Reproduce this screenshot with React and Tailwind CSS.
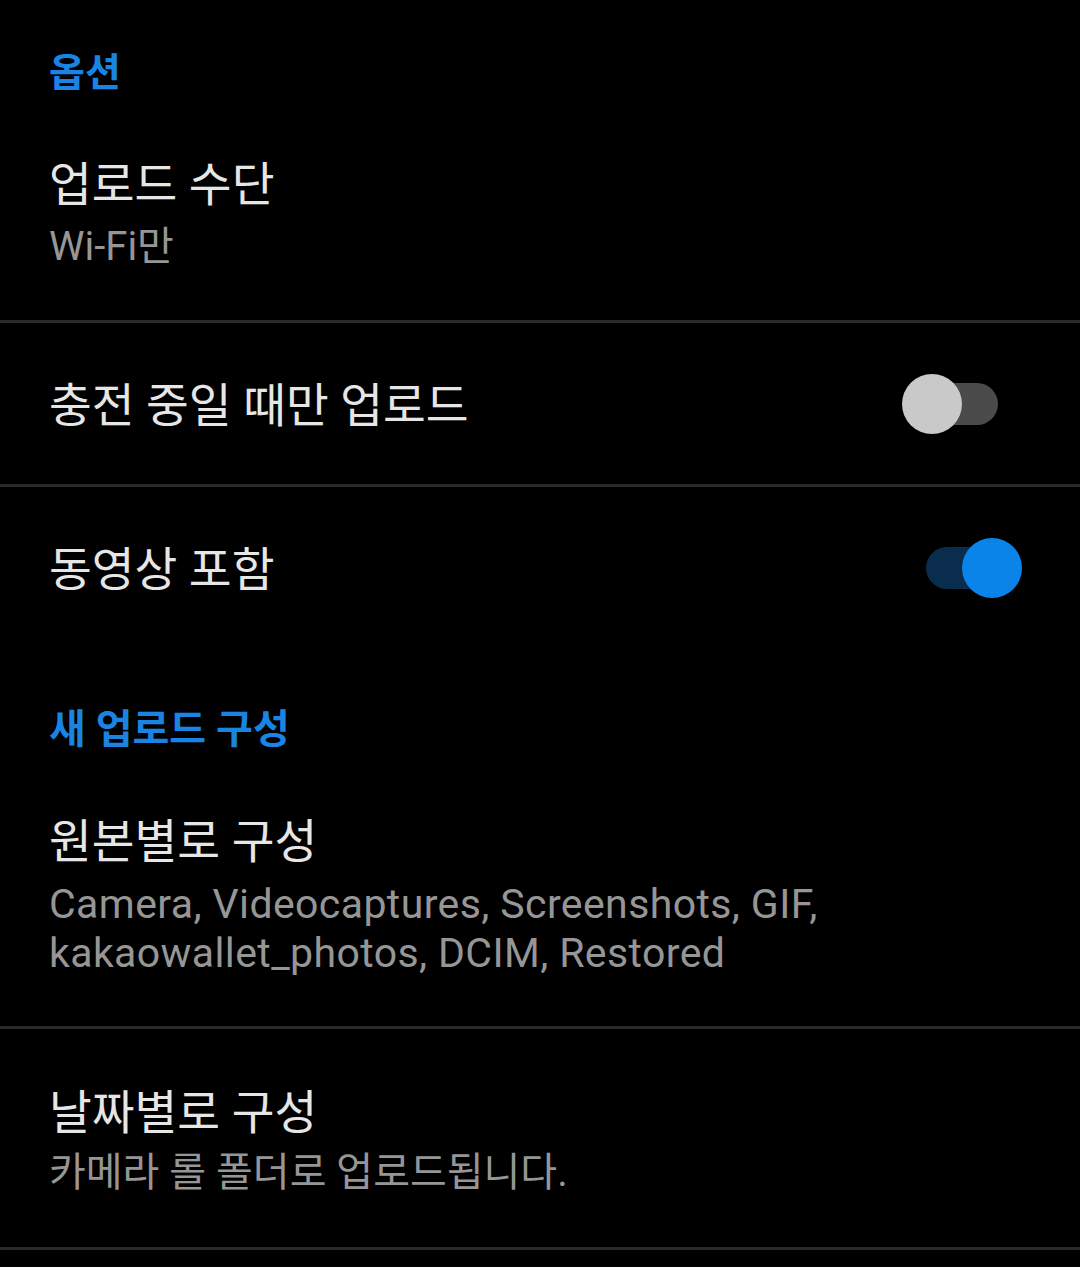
import React from "react";

const font = { fontFamily: 'Roboto, "Noto Sans CJK KR", sans-serif' };

function Divider() {
  return <div className="h-[3px] bg-[#2a2a2a]" />;
}

function Toggle({ on }) {
  return (
    <div className="relative h-[60px] w-[120px] shrink-0">
      <div
        className={
          "absolute top-[9px] left-[24px] h-[42px] w-[72px] rounded-full " +
          (on ? "bg-[#0b2d4d]" : "bg-[#4b4b4b]")
        }
      />
      <div
        className={
          "absolute top-0 h-[60px] w-[60px] rounded-full " +
          (on ? "left-[60px] bg-[#0a84e8]" : "left-0 bg-[#c9c9c9]")
        }
      />
    </div>
  );
}

export default function App() {
  return (
    <div className="min-h-[1267px] w-[1080px] bg-black text-[#e6e6e6]" style={font}>
      {/* header 옵션 */}
      <div className="px-[49px] pt-[49px] text-[39px] font-bold leading-[48px] text-[#1a84e2]">
        옵션
      </div>

      {/* 업로드 수단 */}
      <div className="flex flex-col px-[49px] pt-[60px] pb-[45px]">
        <div className="text-[46.5px] leading-[56px]">업로드 수단</div>
        <div className="mt-[6px] text-[40px] leading-[56px] text-[#969696]">Wi-Fi만</div>
      </div>
      <Divider />

      {/* 충전 중일 때만 업로드 */}
      <div className="flex h-[161px] items-center justify-between pl-[49px] pr-[58px]">
        <div className="pt-[4px] text-[46.5px] leading-[56px]">충전 중일 때만 업로드</div>
        <Toggle on={false} />
      </div>
      <Divider />

      {/* 동영상 포함 */}
      <div className="flex h-[162px] items-center justify-between pl-[49px] pr-[58px]">
        <div className="pt-[4px] text-[46.5px] leading-[56px]">동영상 포함</div>
        <Toggle on={true} />
      </div>

      {/* header 새 업로드 구성 */}
      <div className="px-[49px] pt-[57px] text-[40px] font-bold leading-[48px] text-[#1a84e2]">
        새 업로드 구성
      </div>

      {/* 원본별로 구성 */}
      <div className="flex flex-col px-[49px] pt-[60px] pb-[48px]">
        <div className="text-[46.5px] leading-[56px]">원본별로 구성</div>
        <div className="mt-[10px] text-[41px] leading-[49px] tracking-[0.4px] text-[#969696]">
          Camera, Videocaptures, Screenshots, GIF,
          <br />
          kakaowallet_photos, DCIM, Restored
        </div>
      </div>
      <Divider />

      {/* 날짜별로 구성 */}
      <div className="flex flex-col px-[49px] pt-[56px] pb-[50px]">
        <div className="text-[46.5px] leading-[56px]">날짜별로 구성</div>
        <div className="mt-[7px] text-[40px] leading-[49px] text-[#969696]">
          카메라 롤 폴더로 업로드됩니다.
        </div>
      </div>
      <Divider />
    </div>
  );
}
